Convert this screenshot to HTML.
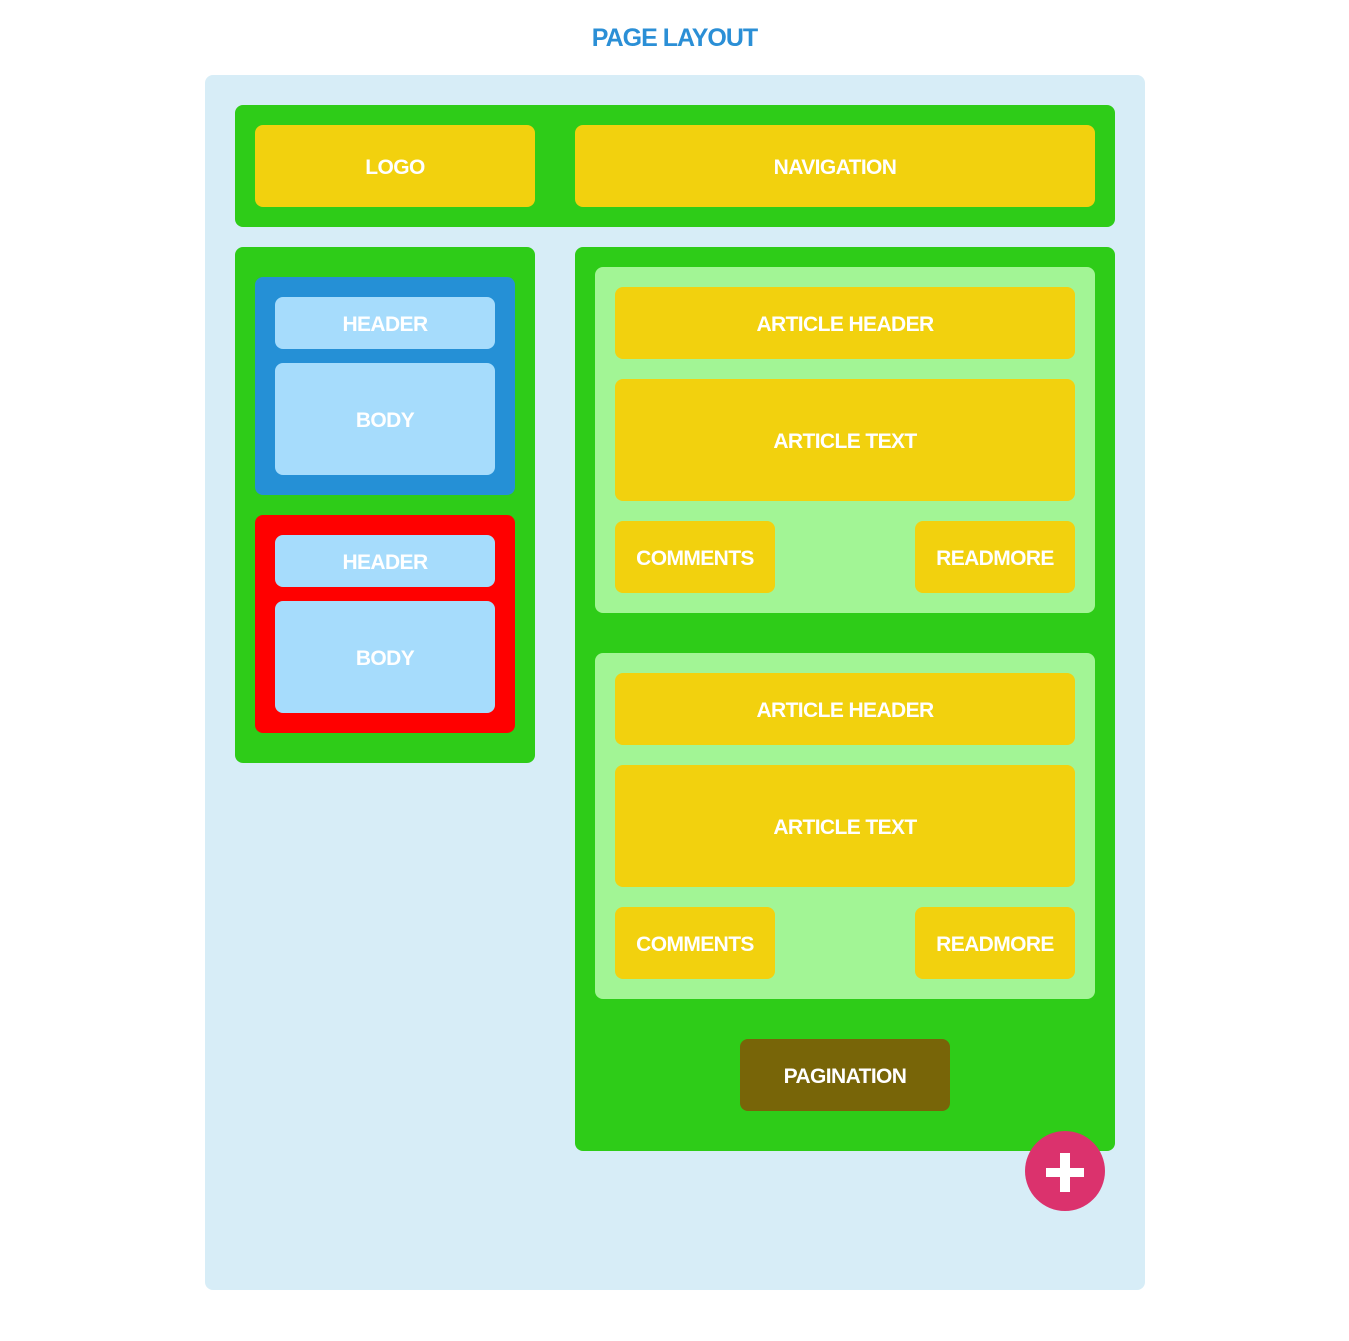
<!DOCTYPE html>
<html><head><style>
body{margin:0;background:#fff;width:1349px;height:1341px;position:relative;font-family:"Liberation Sans",sans-serif;font-weight:bold;}
div{position:absolute;box-sizing:border-box;}
.t{display:flex;align-items:center;justify-content:center;color:#fff;font-size:21px;border-radius:8px;letter-spacing:-0.6px;padding-top:4px}
.y{background:#f2d10e}.lb{background:#a6dcfc}.g{background:#2ecc18;border-radius:8px}.lg{background:#a2f595;border-radius:8px}
</style></head><body>
<div style="left:0;width:1349px;top:24px;text-align:center;color:#2b8fd6;font-size:25px;letter-spacing:-1px">PAGE LAYOUT</div>
<div style="left:205px;top:75px;width:940px;height:1215px;background:#d7edf7;border-radius:8px"></div>
<div class="g" style="left:235px;top:105px;width:880px;height:122px"></div>
<div class="t y" style="left:255px;top:125px;width:280px;height:82px">LOGO</div>
<div class="t y" style="left:575px;top:125px;width:520px;height:82px">NAVIGATION</div>
<div class="g" style="left:235px;top:247px;width:300px;height:516px"></div>
<div style="left:255px;top:277px;width:260px;height:218px;background:#2590d6;border-radius:8px"></div>
<div class="t lb" style="left:275px;top:297px;width:220px;height:52px">HEADER</div>
<div class="t lb" style="left:275px;top:363px;width:220px;height:112px">BODY</div>
<div style="left:255px;top:515px;width:260px;height:218px;background:#ff0000;border-radius:8px"></div>
<div class="t lb" style="left:275px;top:535px;width:220px;height:52px">HEADER</div>
<div class="t lb" style="left:275px;top:601px;width:220px;height:112px">BODY</div>
<div class="g" style="left:575px;top:247px;width:540px;height:904px"></div>
<div class="lg" style="left:595px;top:267px;width:500px;height:346px"></div>
<div class="t y" style="left:615px;top:287px;width:460px;height:72px">ARTICLE HEADER</div>
<div class="t y" style="left:615px;top:379px;width:460px;height:122px">ARTICLE TEXT</div>
<div class="t y" style="left:615px;top:521px;width:160px;height:72px">COMMENTS</div>
<div class="t y" style="left:915px;top:521px;width:160px;height:72px">READMORE</div>
<div class="lg" style="left:595px;top:653px;width:500px;height:346px"></div>
<div class="t y" style="left:615px;top:673px;width:460px;height:72px">ARTICLE HEADER</div>
<div class="t y" style="left:615px;top:765px;width:460px;height:122px">ARTICLE TEXT</div>
<div class="t y" style="left:615px;top:907px;width:160px;height:72px">COMMENTS</div>
<div class="t y" style="left:915px;top:907px;width:160px;height:72px">READMORE</div>
<div class="t" style="left:740px;top:1039px;width:210px;height:72px;background:#786508">PAGINATION</div>
<div style="left:1025px;top:1131px;width:80px;height:80px;border-radius:50%;background:#db326d"></div>
<div style="left:1046px;top:1168px;width:38px;height:9px;background:#fff"></div>
<div style="left:1060px;top:1153px;width:10px;height:39px;background:#fff"></div>
</body></html>
